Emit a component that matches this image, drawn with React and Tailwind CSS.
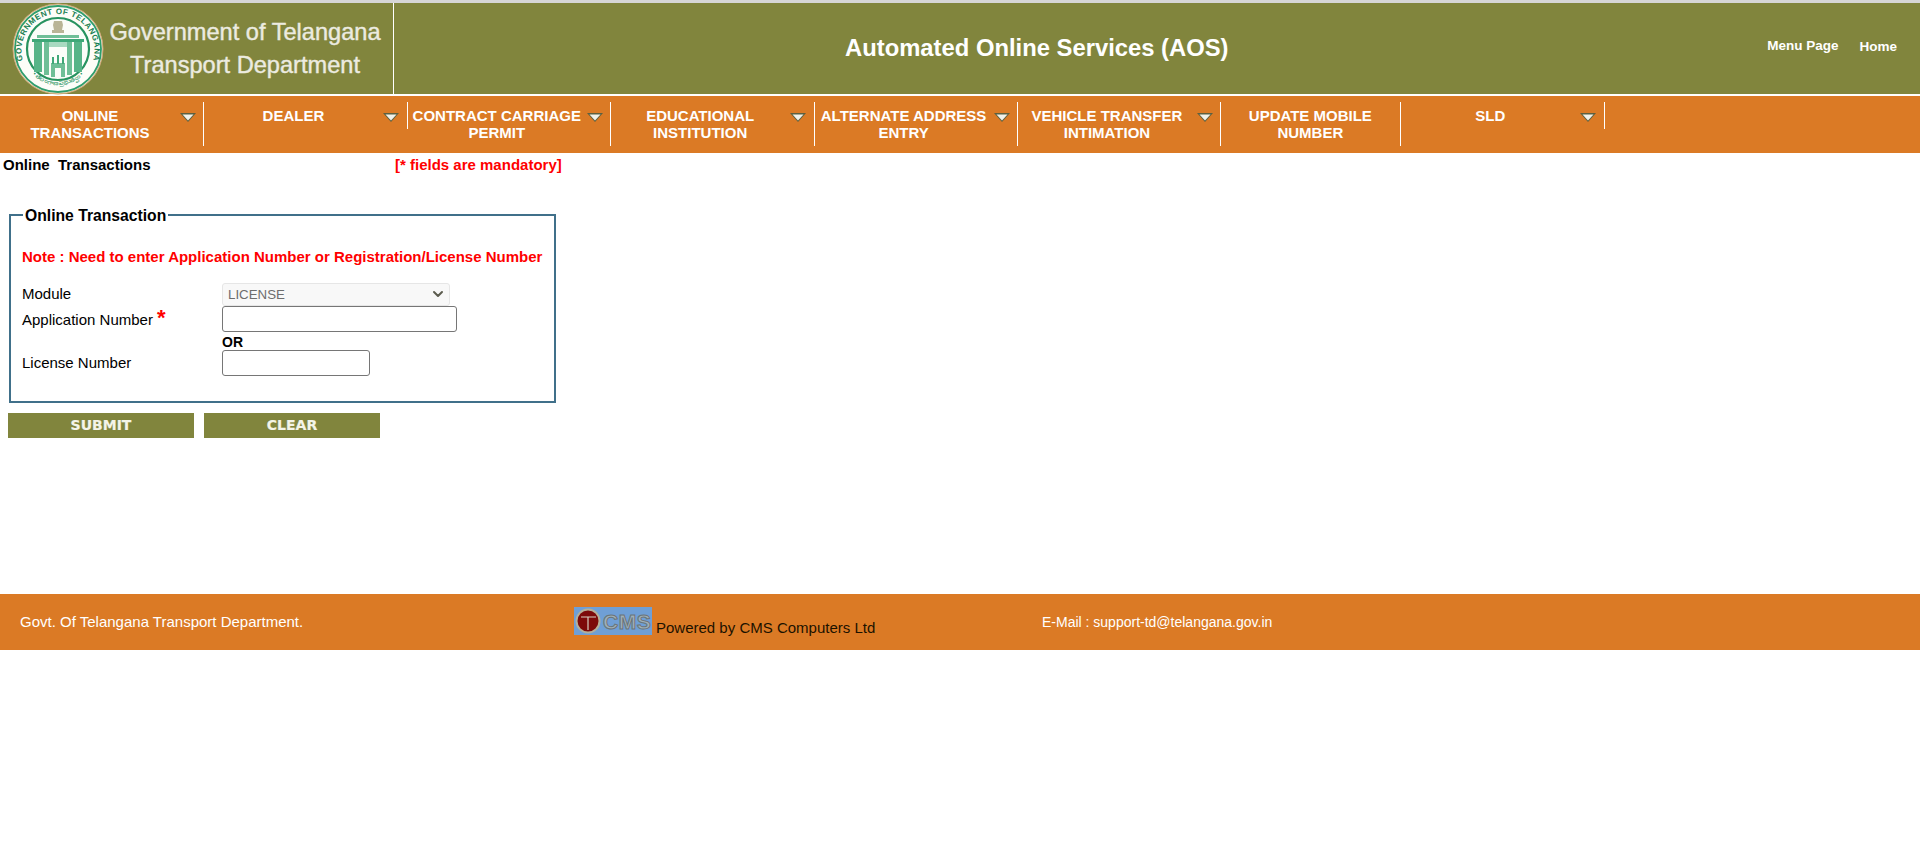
import { useState } from "react";
import { ChevronDown } from "lucide-react";

const menuItems = [
  { label: ["ONLINE", "TRANSACTIONS"], arrow: true },
  { label: ["DEALER"], arrow: true },
  { label: ["CONTRACT CARRIAGE", "PERMIT"], arrow: true },
  { label: ["EDUCATIONAL", "INSTITUTION"], arrow: true },
  { label: ["ALTERNATE ADDRESS", "ENTRY"], arrow: true },
  { label: ["VEHICLE TRANSFER", "INTIMATION"], arrow: true },
  { label: ["UPDATE MOBILE", "NUMBER"], arrow: false },
  { label: ["SLD"], arrow: true },
];

function Seal() {
  return (
    <svg width="92" height="92" viewBox="0 0 92 92" className="shrink-0">
      <defs>
        <path id="sealTop" d="M 12.5 62 A 36.5 36.5 0 1 1 79.5 62" />
        <path id="sealBottom" d="M 11 56 A 36.5 36.5 0 0 0 81 56" />
      </defs>
      <circle cx="46" cy="46" r="45" fill="#efe6cc" stroke="#d0a878" strokeWidth="1" />
      <circle cx="46" cy="46" r="43" fill="#fdfdf8" stroke="#2f9d6d" strokeWidth="1.8" />
      <circle cx="46" cy="46" r="31" fill="#fbfdf9" stroke="#27935f" strokeWidth="2.2" />
      <text fill="#1a7f52" fontSize="8" fontWeight="700" letterSpacing="0.5" fontFamily="'Liberation Sans', sans-serif">
        <textPath href="#sealTop" startOffset="50%" textAnchor="middle">
          GOVERNMENT OF TELANGANA
        </textPath>
      </text>
      <text fill="#27935f" fontSize="6.5" fontFamily="'Noto Sans', sans-serif">
        <textPath href="#sealBottom" startOffset="50%" textAnchor="middle">
          • తెలంగాణ ప్రభుత్వం •
        </textPath>
      </text>
      {/* lion capital */}
      <path d="M42 18h8l1 4-1 5h2v3H40v-3h2l-1-5z" fill="#b9b596" />
      {/* kakatiya arch */}
      <path d="M20 36h52v3H20z" fill="#3fa878" />
      <path d="M25 32h42v3H25z" fill="#6fbf97" />
      <path d="M22 39h8v30h-8zM62 39h8v30h-8z" fill="#57b488" />
      <path d="M32 39h5v33h-5zM55 39h5v33h-5z" fill="#6fbf97" />
      <path d="M37 39h18v5H37z" fill="#a8d9c0" />
      {/* charminar */}
      <path d="M39 60h14v14H39z" fill="#6fbf97" />
      <path d="M40 54h2v7h-2zM50 54h2v7h-2zM45 52h2v9h-2z" fill="#3fa878" />
      <path d="M43 65h6v9h-6z" fill="#fbfdf9" />
    </svg>
  );
}

function CmsLogo() {
  return (
    <div className="flex h-[28px] w-[78px] items-center bg-[#6f9fd6] pl-[1px]">
      <svg width="26" height="26" viewBox="0 0 26 26" className="shrink-0">
        <circle cx="13" cy="13" r="11.5" fill="#7d0a0a" stroke="#b5b09a" strokeWidth="2" />
        <path d="M6 9h15M13 9v13" stroke="#d8cfc0" strokeWidth="1.2" fill="none" />
      </svg>
      <span className="ml-[2px] font-['Liberation_Sans',sans-serif] text-[21px] leading-none font-bold tracking-[0.5px] text-[#9fb0b8] [-webkit-text-stroke:1px_#6b7478]">
        CMS
      </span>
    </div>
  );
}

export default function App() {
  const [application, setApplication] = useState("");
  const [license, setLicense] = useState("");

  return (
    <div className="min-h-[868px] bg-white font-['Liberation_Sans',Arial,sans-serif] text-[15px] text-black">
      <div className="h-[3px] bg-[#d6d6d6]" />

      <header className="flex h-[91px] bg-[#81853d]">
        <div className="flex w-[394px] shrink-0 items-center border-r border-white pl-[12px]">
          <Seal />
          <div className="ml-[5px] w-[272px] text-center text-[23.6px] leading-[33px] text-[#ecebe0] [-webkit-text-stroke:0.4px_#ecebe0]">
            <div className="whitespace-nowrap">Government of Telangana</div>
            <div className="whitespace-nowrap">Transport Department</div>
          </div>
        </div>
        <h1 className="flex-1 pl-[451px] text-left text-[23.8px] leading-[89px] font-bold whitespace-nowrap text-white">
          Automated Online Services (AOS)
        </h1>
        <nav className="flex shrink-0 items-center gap-[21px] pr-[23px] pb-[2px] text-[13.5px] font-bold text-white">
          <a className="-mt-[2px]">Menu Page</a>
          <a>Home</a>
        </nav>
      </header>

      <div className="h-[2px] bg-white" />

      <nav className="flex h-[57px] items-start bg-[#db7a25] pt-[6px] pl-[1px] text-[15px] leading-[17px] font-bold text-white">
        {menuItems.map((item) => (
          <div
            key={item.label[0]}
            className={`flex shrink-0 border-r border-white pb-[5px] ${item.arrow ? "w-[203.4px]" : "w-[180px]"}`}
          >
            <div className="-ml-[1px] w-[180px] shrink-0 pt-[5px] text-center whitespace-nowrap">
              {item.label.map((line) => (
                <div key={line}>{line}</div>
              ))}
            </div>
            {item.arrow && (
              <svg width="16" height="9" viewBox="0 0 16 9" className="mt-[11px] shrink-0">
                <path d="M0 0h16L8 9z" fill="#5c6040" />
                <path d="M2.5 1.5h11L8 7.5z" fill="#f1f1ea" />
              </svg>
            )}
          </div>
        ))}
      </nav>

      <div className="flex h-[23px] items-center pt-[1px] font-bold">
        <span className="ml-[3px] w-[392px] whitespace-pre">Online  Transactions</span>
        <span className="text-[#ff0000]">[* fields are mandatory]</span>
      </div>

      <fieldset className="mt-[30px] ml-[9px] h-[197px] w-[547px] border-2 border-[#40708a] pr-[10px] pl-[11px]">
        <legend className="ml-[1px] px-[2px] text-[15.7px] leading-[17px] font-bold">
          <span className="inline-block translate-y-[1px]">Online Transaction</span>
        </legend>
        <p className="mt-[25px] leading-[17px] font-bold whitespace-nowrap text-[#ff0000]">
          Note : Need to enter Application Number or Registration/License Number
        </p>
        <div className="mt-[17px] flex h-[24px] items-center">
          <label className="w-[200px] shrink-0">Module</label>
          <div className="relative h-[23px] w-[228px]">
            <select
              disabled
              value="LICENSE"
              onChange={() => {}}
              className="h-full w-full appearance-none rounded-[3px] border border-[#e6e6e6] bg-[#f8f8f8] pl-[5px] text-[13.3px] text-[#6d6d6d]"
            >
              <option>LICENSE</option>
            </select>
            <ChevronDown size={16} strokeWidth={3} className="pointer-events-none absolute top-[3px] right-[4px] text-[#5c5c4f]" />
          </div>
        </div>
        <div className="flex h-[26px] items-center">
          <label className="w-[200px] shrink-0 pt-[2px]">
            Application Number <span className="text-[22px] leading-[14px] font-bold text-[#ff0000]">*</span>
          </label>
          <input
            value={application}
            onChange={(e) => setApplication(e.target.value)}
            className="h-[26px] w-[235px] rounded-[3px] border border-[#767676] px-[2px]"
          />
        </div>
        <div className="h-[18px] pl-[200px] text-[14px] leading-[20px] font-bold">OR</div>
        <div className="flex h-[26px] items-center">
          <label className="w-[200px] shrink-0">License Number</label>
          <input
            value={license}
            onChange={(e) => setLicense(e.target.value)}
            className="h-[26px] w-[148px] rounded-[3px] border border-[#767676] px-[2px]"
          />
        </div>
      </fieldset>

      <div className="mt-[10px] ml-[8px] flex gap-[10px] font-['DejaVu_Sans',sans-serif] text-[14px] font-bold text-[#f4f4e8] [-webkit-text-stroke:0.2px_#f4f4e8]">
        <button className="h-[25px] w-[186px] bg-[#81853d]">SUBMIT</button>
        <button className="h-[25px] w-[176px] bg-[#81853d]">CLEAR</button>
      </div>

      <footer className="mt-[156px] flex h-[56px] items-center bg-[#db7a25]">
        <div className="w-[574px] shrink-0 pl-[20px] text-white">Govt. Of Telangana Transport Department.</div>
        <div className="mb-[2px] flex w-[468px] shrink-0 items-end">
          <CmsLogo />
          <span className="ml-[4px] translate-y-[4px] text-[#1b1200]">Powered by CMS Computers Ltd</span>
        </div>
        <div className="text-[14px] text-white">E-Mail : support-td@telangana.gov.in</div>
      </footer>
    </div>
  );
}
